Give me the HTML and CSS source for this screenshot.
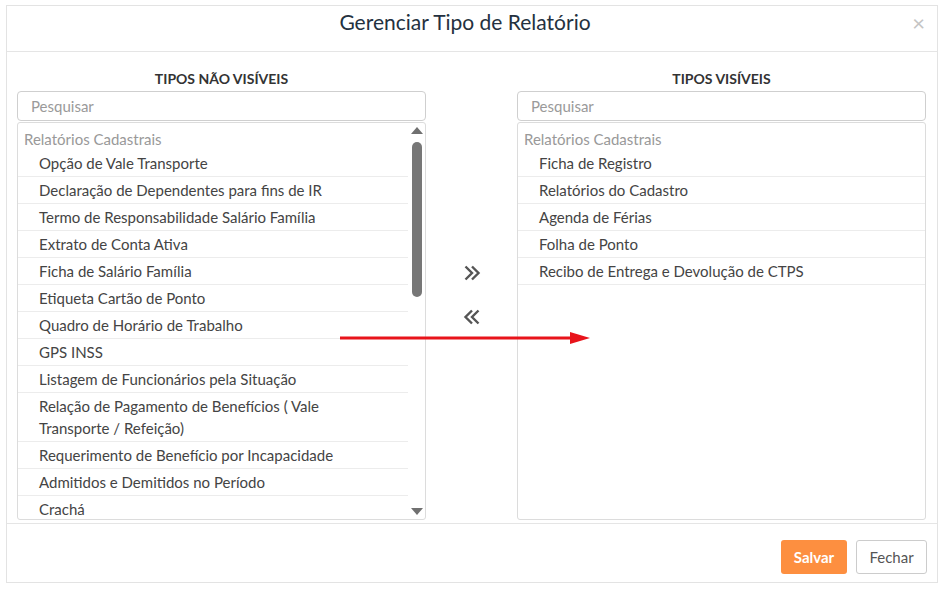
FILE: index.html
```html
<!DOCTYPE html>
<html lang="pt-BR">
<head>
    <meta charset="UTF-8">
    <meta name="viewport" content="width=device-width, initial-scale=1.0">
    <title>Gerenciar Tipo de Relatório</title>
    <link rel="stylesheet" href="styles.css">
</head>
<body>

<div class="modal">
    <div class="modal-header">
        <h2>Gerenciar Tipo de Relatório</h2>
        <span class="close">&times;</span>
    </div>

    <div class="modal-body">
        <div class="column">
            <h4>TIPOS NÃO VISÍVEIS</h4>
            <input type="text" class="search" placeholder="Pesquisar">
            <div class="listbox">
                <ul class="items">
                    <li class="group">Relatórios Cadastrais</li>
                    <li>Opção de Vale Transporte</li>
                    <li>Declaração de Dependentes para fins de IR</li>
                    <li>Termo de Responsabilidade Salário Família</li>
                    <li>Extrato de Conta Ativa</li>
                    <li>Ficha de Salário Família</li>
                    <li>Etiqueta Cartão de Ponto</li>
                    <li>Quadro de Horário de Trabalho</li>
                    <li>GPS INSS</li>
                    <li>Listagem de Funcionários pela Situação</li>
                    <li>Relação de Pagamento de Benefícios ( Vale Transporte / Refeição)</li>
                    <li>Requerimento de Benefício por Incapacidade</li>
                    <li>Admitidos e Demitidos no Período</li>
                    <li>Crachá</li>
                </ul>
                <div class="scrollbar">
                    <span class="arrow-up"></span>
                    <div class="track"><div class="thumb"></div></div>
                    <span class="arrow-down"></span>
                </div>
            </div>
        </div>

        <div class="middle">
            <!-- mover para visíveis -->
            <button class="move">
                <svg width="18" height="18" viewBox="0 0 18 18"><path d="M2.5 2.5 L9 9 L2.5 15.5 M9 2.5 L15.5 9 L9 15.5" fill="none" stroke="#555" stroke-width="2.4"/></svg>
            </button>
            <!-- mover para não visíveis -->
            <button class="move">
                <svg width="18" height="18" viewBox="0 0 18 18"><path d="M15.5 2.5 L9 9 L15.5 15.5 M9 2.5 L2.5 9 L9 15.5" fill="none" stroke="#555" stroke-width="2.4"/></svg>
            </button>
        </div>

        <div class="column">
            <h4>TIPOS VISÍVEIS</h4>
            <input type="text" class="search" placeholder="Pesquisar">
            <div class="listbox">
                <ul class="items">
                    <li class="group">Relatórios Cadastrais</li>
                    <li>Ficha de Registro</li>
                    <li>Relatórios do Cadastro</li>
                    <li>Agenda de Férias</li>
                    <li>Folha de Ponto</li>
                    <li>Recibo de Entrega e Devolução de CTPS</li>
                </ul>
            </div>
        </div>
    </div>

    <div class="modal-footer">
        <button class="btn btn-save">Salvar</button>
        <button class="btn btn-close">Fechar</button>
    </div>
</div>

<!-- seta de anotação -->
<svg class="annotation" width="260" height="20" viewBox="0 0 260 20">
    <line x1="0" y1="10" x2="232" y2="10" stroke="#e8141b" stroke-width="3"/>
    <polygon points="230,4 250,10 230,16" fill="#e8141b"/>
</svg>

</body>
</html>
```

FILE: styles.css
```css
body {
    margin: 0;
    font-family: Lato, "Noto Sans", sans-serif;
    background-color: #fff;
    color: #444;
}

.modal {
    margin: 5px 0 0 6px;
    width: 930px;
    height: 576px;
    border: 1px solid #e3e3e3;
    display: flex;
    flex-direction: column;
    position: relative;
}

.modal-header {
    height: 45px;
    border-bottom: 1px solid #e5e5e5;
    text-align: center;
    padding-right: 14px;
}

.modal-header h2 {
    margin: 0;
    font-size: 21px;
    font-weight: normal;
    color: #243140;
    line-height: 32px;
}

.close {
    position: absolute;
    top: 3px;
    right: 12px;
    font-size: 22px;
    color: #c4c4c4;
}

.modal-body {
    display: flex;
    padding: 0 10px 0 10px;
    flex: 1;
}

.column {
    width: 409px;
    display: flex;
    flex-direction: column;
}

.column h4 {
    margin: 17px 0 2px;
    font-size: 14px;
    font-weight: bold;
    color: #333;
    text-align: center;
    line-height: 20px;
}

.search {
    height: 30px;
    box-sizing: border-box;
    border: 1px solid #cfcfcf;
    border-radius: 4px;
    padding: 0 13px;
    font-family: inherit;
    font-size: 15px;
    color: #444;
}

.search::placeholder {
    color: #9a9a9a;
}

.listbox {
    margin-top: 1px;
    height: 398px;
    box-sizing: border-box;
    border: 1px solid #dcdcdc;
    border-radius: 3px;
    display: flex;
    overflow: hidden;
}

.items {
    list-style: none;
    margin: 0;
    padding: 0;
    flex: 1;
    overflow: hidden;
}

.items li {
    padding: 2px 45px 2px 21px;
    line-height: 22px;
    font-size: 15px;
    border-bottom: 1px solid #ececec;
}

.items li.group {
    padding: 5px 6px 0;
    color: #999;
    border-bottom: none;
}

.scrollbar {
    width: 17px;
    display: flex;
    flex-direction: column;
    align-items: center;
    padding: 4px 0;
}

.arrow-up, .arrow-down {
    width: 0;
    height: 0;
    border-left: 6px solid transparent;
    border-right: 6px solid transparent;
}

.arrow-up {
    border-bottom: 7px solid #707070;
}

.arrow-down {
    border-top: 7px solid #707070;
}

.track {
    flex: 1;
    width: 10px;
    padding: 8px 0;
}

.thumb {
    height: 155px;
    background-color: #777;
    border-radius: 5px;
}

.middle {
    width: 91px;
    display: flex;
    flex-direction: column;
    align-items: center;
    padding-top: 212px;
    gap: 26px;
}

.move {
    background: none;
    border: none;
    padding: 0;
    cursor: pointer;
    height: 18px;
}

.modal-footer {
    border-top: 1px solid #e5e5e5;
    display: flex;
    justify-content: flex-end;
    gap: 9px;
    padding: 16px 10px 8px;
    margin-top: 2px;
}

.btn {
    height: 34px;
    border-radius: 3px;
    font-family: inherit;
    font-size: 15px;
    cursor: pointer;
}

.btn-save {
    width: 66px;
    border: none;
    background-color: #fd8f40;
    color: #fff;
    font-weight: bold;
}

.btn-close {
    width: 71px;
    border: 1px solid #cccccc;
    background-color: #fff;
    color: #555;
}

.annotation {
    position: absolute;
    left: 340px;
    top: 328px;
}
```
